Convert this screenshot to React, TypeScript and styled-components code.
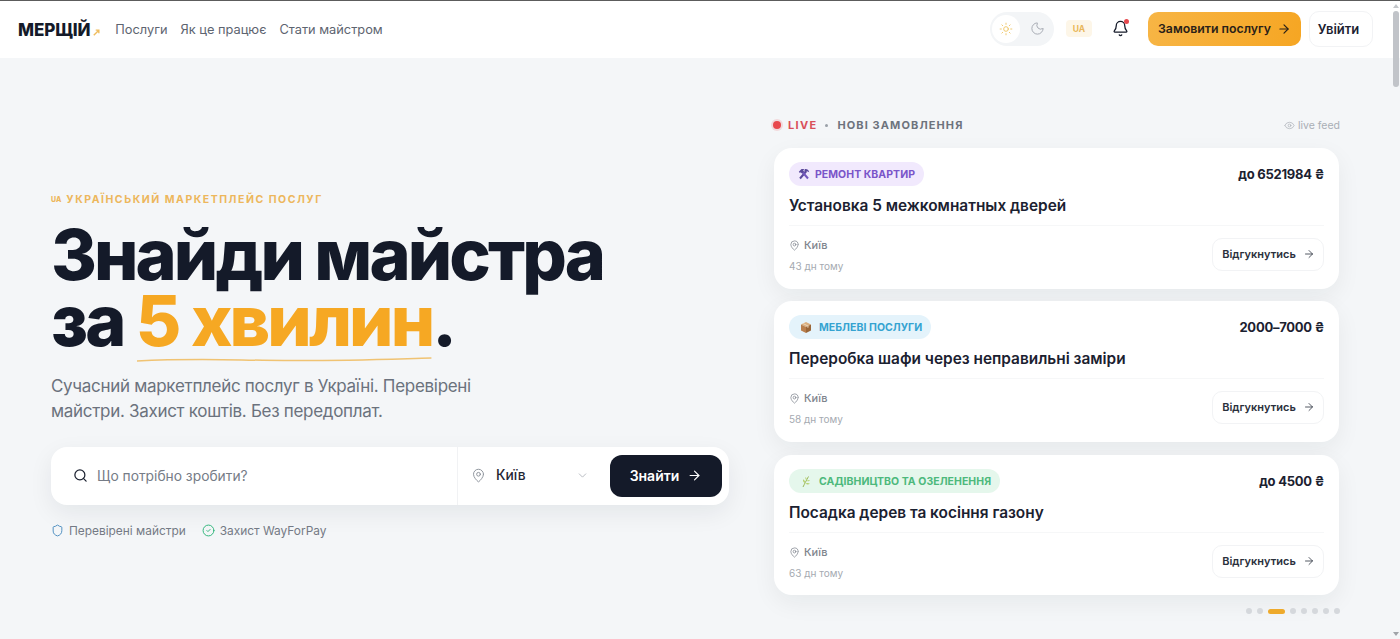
import React from 'react';
import styled, { createGlobalStyle } from 'styled-components';
import { ArrowRight, Bell, ChevronDown, CircleCheck, Eye, MapPin, Moon, Search, Shield, Sun } from 'lucide-react';

const GlobalStyle = createGlobalStyle`
  html, body, #root {
    margin: 0;
    padding: 0;
    height: 100%;
  }

  body {
    overflow: hidden;
    background: #f4f6f8;
    color: #141a29;
    font-family: Inter, "Noto Sans", "Liberation Sans", sans-serif;
  }

  * {
    box-sizing: border-box;
  }
`;

const Page = styled.div`
  height: 639px;
  overflow: hidden;
  border-top: 1px solid #5c5c5c;
`;

/* Header */
const Header = styled.header`
  height: 57px;
  padding: 0 27px 2px 18px;
  display: flex;
  align-items: center;
  justify-content: space-between;
  background: #fff;
`;

const HeaderSide = styled.div`
  display: flex;
  align-items: center;
`;

const HeaderNav = styled(HeaderSide)`
  padding-top: 2px;
`;

const Logo = styled.div`
  display: flex;
  align-items: center;
  gap: 3px;
  margin-right: 15px;
  font-size: 17px;
  font-weight: 800;
  letter-spacing: -0.1px;
  color: #141a29;

  svg {
    margin-top: 5px;
  }
`;

const NavLink = styled.a`
  margin-right: 13px;
  font-size: 12.8px;
  font-weight: 400;
  color: #5d6470;
`;

const ThemeToggle = styled.div`
  width: 64px;
  height: 34px;
  margin-right: 12px;
  padding: 0 2px;
  display: flex;
  align-items: center;
  gap: 3px;
  border-radius: 17px;
  background: #f3f5f7;
`;

const ThemeOption = styled.span<{ $active?: boolean }>`
  width: 28px;
  height: 28px;
  display: flex;
  align-items: center;
  justify-content: center;
  border-radius: 14px;
  background: ${p => (p.$active ? '#fff' : 'transparent')};
  color: ${p => (p.$active ? '#eec25e' : '#a3a8b0')};
`;

const LangChip = styled.span`
  width: 26px;
  height: 17px;
  margin-right: 18px;
  display: flex;
  align-items: center;
  justify-content: center;
  border-radius: 4px;
  background: #fdf6e8;
  color: #e9b658;
  font-size: 8.5px;
  font-weight: 700;
`;

const BellWrap = styled.span`
  position: relative;
  width: 20px;
  height: 20px;
  margin-right: 18px;
  display: flex;
  align-items: center;
  justify-content: center;
  color: #141a29;
`;

const BellDot = styled.i`
  position: absolute;
  top: 0;
  right: 1px;
  width: 5px;
  height: 5px;
  border-radius: 50%;
  background: #e5484d;
`;

const OrderButton = styled.button`
  width: 153px;
  height: 34px;
  margin-right: 8px;
  padding: 0;
  display: flex;
  align-items: center;
  justify-content: center;
  gap: 6px;
  border: 0;
  border-radius: 10px;
  background: linear-gradient(100deg, #f7b545, #f6a623);
  color: #2a2118;
  font-family: inherit;
  font-size: 12.3px;
  font-weight: 600;
`;

const LoginButton = styled.button`
  width: 64px;
  height: 36px;
  padding: 0 5px 0 0;
  border: 1px solid #f2f3f5;
  border-radius: 10px;
  background: #fff;
  color: #1b2130;
  font-family: inherit;
  font-size: 13px;
  font-weight: 600;
`;

/* Hero */
const Hero = styled.main`
  padding: 60px 60px 0 51px;
  display: grid;
  grid-template-columns: 1fr 568px;
  align-items: start;
`;

const HeroText = styled.section`
  padding-top: 75px;
  display: flex;
  flex-direction: column;
  align-items: flex-start;
`;

const Eyebrow = styled.div`
  display: flex;
  align-items: center;
  gap: 5px;
  margin-bottom: 16px;
  color: #edb75c;
  font-size: 10.5px;
  line-height: 13px;
  font-weight: 700;
  letter-spacing: 1.52px;
`;

const EyebrowFlag = styled.span`
  font-size: 7px;
  font-weight: 800;
  letter-spacing: 0;
`;

const Title = styled.h1`
  margin: 0 0 20px;
  font-size: 70px;
  line-height: 66px;
  font-weight: 850;
  letter-spacing: -2.92px;
  color: #141a29;
`;

const Accent = styled.span`
  position: relative;
  display: inline-block;
  color: #f6a823;
`;

const Underline = styled.svg`
  position: absolute;
  left: 0;
  bottom: -10px;
  width: 100%;
  height: 8px;
`;

const Lead = styled.p`
  margin: 0 0 23px;
  width: 440px;
  font-size: 17px;
  line-height: 25px;
  font-weight: 400;
  letter-spacing: -0.3px;
  color: #6b727d;
`;

const SearchBar = styled.div`
  width: 678px;
  height: 58px;
  padding: 0 7px 0 22px;
  display: flex;
  align-items: center;
  border-radius: 16px;
  background: #fff;
  box-shadow: 0 8px 24px rgba(20, 26, 41, 0.07);
`;

const SearchField = styled.div`
  width: 385px;
  height: 100%;
  padding-bottom: 1px;
  display: flex;
  align-items: center;
  gap: 9px;
  border-right: 1px solid #f1f2f4;
  color: #1b2130;
`;

const Placeholder = styled.span`
  font-size: 13.8px;
  color: #767c87;
`;

const CityField = styled.div`
  width: 152px;
  padding: 0 21px 2px 13px;
  display: flex;
  align-items: center;
  color: #8a9099;
`;

const CityName = styled.span`
  margin-left: 10px;
  flex: 1;
  font-size: 13.8px;
  font-weight: 500;
  color: #1f2533;
`;

const FindButton = styled.button`
  width: 112px;
  height: 42px;
  padding: 0 0 2px;
  display: flex;
  align-items: center;
  justify-content: center;
  gap: 8px;
  border: 0;
  border-radius: 12px;
  background: #141a29;
  color: #fff;
  font-family: inherit;
  font-size: 14px;
  font-weight: 600;
`;

const Perks = styled.div`
  margin-top: 18px;
  display: flex;
  gap: 16px;
`;

const Perk = styled.span<{ $color: string }>`
  display: flex;
  align-items: center;
  gap: 5px;
  font-size: 11.9px;
  line-height: 15px;
  color: #747a85;

  svg {
    color: ${p => p.$color};
  }
`;

/* Live feed */
const Feed = styled.section`
  display: flex;
  flex-direction: column;
`;

const FeedHead = styled.div`
  height: 14px;
  margin-bottom: 16px;
  display: flex;
  align-items: center;
`;

const LiveDot = styled.i`
  width: 8px;
  height: 8px;
  margin: 0 7px 0 1px;
  border-radius: 50%;
  background: #e8474c;
  box-shadow: 0 0 0 2px rgba(232, 71, 76, 0.16);
`;

const LiveLabel = styled.span`
  color: #d9505a;
  font-size: 11px;
  font-weight: 700;
  letter-spacing: 1.3px;
`;

const HeadBullet = styled.i`
  width: 3px;
  height: 3px;
  margin: 0 9px 0 8px;
  border-radius: 50%;
  background: #9aa0a8;
`;

const HeadTitle = styled.span`
  flex: 1;
  color: #6d737d;
  font-size: 11px;
  font-weight: 700;
  letter-spacing: 1.1px;
`;

const LiveFeedNote = styled.span`
  display: flex;
  align-items: center;
  gap: 3px;
  color: #a9aeb5;
  font-size: 10.5px;
`;

const Card = styled.article`
  height: 141px;
  margin: 0 1px 12px 2px;
  padding: 14px 15px 0;
  border-radius: 18px;
  background: #fff;
  box-shadow: 0 8px 24px rgba(20, 26, 41, 0.06);

  &:nth-of-type(2) {
    margin-bottom: 13px;
  }

  &:nth-of-type(3) {
    height: 140px;
  }
`;

const CardTop = styled.div`
  display: flex;
  align-items: center;
  justify-content: space-between;
`;

const Tag = styled.span<{ $bg: string; $fg: string }>`
  height: 24px;
  padding: 0 9px;
  display: flex;
  align-items: center;
  gap: 5px;
  border-radius: 12px;
  background: ${p => p.$bg};
  color: ${p => p.$fg};
  font-size: 10.5px;
  font-weight: 700;
  letter-spacing: 0.05px;
`;

const Price = styled.span`
  margin-bottom: 1px;
  font-size: 13px;
  font-weight: 700;
  letter-spacing: -0.25px;
  color: #1b2130;
`;

const CardTitle = styled.h3`
  margin: 10px 0 0;
  padding-bottom: 9px;
  border-bottom: 1px solid #f6f7f8;
  font-size: 15.4px;
  line-height: 20px;
  font-weight: 600;
  color: #1b2130;
`;

const CardBottom = styled.div`
  margin-top: 12px;
  display: flex;
  align-items: flex-start;
  justify-content: space-between;
`;

const Where = styled.div`
  display: flex;
  flex-direction: column;
  gap: 8px;
`;

const Place = styled.span`
  display: flex;
  align-items: center;
  gap: 4px;
  color: #7e848d;
  font-size: 11px;
  line-height: 14px;
  font-weight: 500;
`;

const Ago = styled.span`
  color: #a5aab1;
  font-size: 10px;
  line-height: 13px;
`;

const RespondButton = styled.button`
  width: 112px;
  height: 33px;
  padding: 0 0 1px 1px;
  display: flex;
  align-items: center;
  justify-content: center;
  gap: 7px;
  border: 1px solid #f2f3f5;
  border-radius: 10px;
  background: #fff;
  color: #2a303c;
  font-family: inherit;
  font-size: 11px;
  font-weight: 600;
`;

const Dots = styled.div`
  margin-top: 1px;
  display: flex;
  justify-content: flex-end;
  align-items: center;
  gap: 5px;
`;

const Dot = styled.i<{ $active?: boolean }>`
  width: ${p => (p.$active ? '17px' : '6px')};
  height: ${p => (p.$active ? '5px' : '6px')};
  border-radius: 3px;
  background: ${p => (p.$active ? '#eeaa2c' : '#d5d8dc')};
`;

/* Browser scrollbar, lies over the page */
const ScrollTrack = styled.div`
  position: fixed;
  top: 1px;
  right: 0;
  bottom: 0;
  width: 8px;
  display: flex;
  flex-direction: column;
  align-items: center;
`;

const ScrollArrow = styled.i<{ $down?: boolean }>`
  width: 0;
  height: 0;
  margin: ${p => (p.$down ? 'auto 0 3px' : '3px 0 0')};
  border-left: 3px solid transparent;
  border-right: 3px solid transparent;
  border-top: ${p => (p.$down ? '4px solid #a0a3a8' : '0')};
  border-bottom: ${p => (p.$down ? '0' : '4px solid #c4c7cb')};
`;

const ScrollThumb = styled.i`
  width: 6px;
  height: 76px;
  margin-top: 3px;
  border-radius: 3px;
  background: #c1c4c9;
`;

const ToolsIcon = () => (
  <svg width="12" height="12" viewBox="0 0 12 12" fill="none">
    <path d="M2 10.500 8 3.500" stroke="#5b4a9b" strokeWidth="2" />
    <path d="M10 10.500 4 3.500" stroke="#7357bd" strokeWidth="2" />
    <path d="M.8 3.800 3.500 1h3L5.200 2.300 6 3.500 4 5.500 2.800 4.200 1.900 5z" fill="#5b4a9b" />
    <path d="M6.800 1.200c2-.5 3.900.8 4.400 3L9 3.300 7.800 4.700 6.300 3.200z" fill="#5b4a9b" />
  </svg>
);

const BoxIcon = () => (
  <svg width="16" height="13" viewBox="-1.500 0 16 13">
    <path d="M6.500 1 11.500 3.500 6.500 6 1.500 3.500z" fill="#d9ae7f" />
    <path d="M1.500 3.500 6.500 6v6l-5-2.500z" fill="#b97f4d" />
    <path d="M11.500 3.500 6.500 6v6l5-2.500z" fill="#9a6638" />
    <path d="M4 2.300 9 4.800v1.600l-1 .5V5.300L3 2.800z" fill="#ecd6b8" />
  </svg>
);

const HerbIcon = () => (
  <svg width="16" height="13" viewBox="-1.500 0 16 13" fill="none">
    <path d="M3.500 12C5 9 6.500 6 9 1.500" stroke="#9ab85a" strokeWidth="1" />
    <path d="M5.500 8C4 7.500 3.300 6 3.500 4.200 5 5 5.800 6.300 5.500 8zM7 5.200C6 4.600 5.700 3.200 6 2c1 .8 1.400 2 1 3.200zM6 8.600c1.400-.8 3-.7 4.400.2-1.400 1-3 1-4.400-.2zM7.500 5.800c1-.6 2-.6 3-.2-.9.9-2 1-3 .2z" fill="#b5cf6b" />
  </svg>
);

const cards = [
  { tag: 'РЕМОНТ КВАРТИР', bg: '#f1e9fd', fg: '#7a55c9', icon: <ToolsIcon />, price: 'до 6521984 ₴', title: 'Установка 5 межкомнатных дверей', ago: '43 дн тому' },
  { tag: 'МЕБЛЕВІ ПОСЛУГИ', bg: '#e4f3fb', fg: '#35a3d1', icon: <BoxIcon />, price: '2000–7000 ₴', title: 'Переробка шафи через неправильні заміри', ago: '58 дн тому' },
  { tag: 'САДІВНИЦТВО ТА ОЗЕЛЕНЕННЯ', bg: '#e5f7ec', fg: '#4db97c', icon: <HerbIcon />, price: 'до 4500 ₴', title: 'Посадка дерев та косіння газону', ago: '63 дн тому' },
];

const App: React.FC = () => {
  return (
    <Page>
      <GlobalStyle />
      <Header>
        <HeaderNav>
          <Logo>
            МЕРЩІЙ
            <svg width="7" height="7" viewBox="0 0 9 9" fill="none" stroke="#efbd5f" strokeWidth="1.800">
              <path d="M1 8 7.500 1.500M3.500 1.500h4v4" />
            </svg>
          </Logo>
          <NavLink>Послуги</NavLink>
          <NavLink>Як це працює</NavLink>
          <NavLink>Стати майстром</NavLink>
        </HeaderNav>
        <HeaderSide>
          <ThemeToggle>
            <ThemeOption $active><Sun size={14} strokeWidth={1.5} /></ThemeOption>
            <ThemeOption><Moon size={15} strokeWidth={1.5} /></ThemeOption>
          </ThemeToggle>
          <LangChip>UA</LangChip>
          <BellWrap>
            <Bell size={17} strokeWidth={1.8} />
            <BellDot />
          </BellWrap>
          <OrderButton>
            Замовити послугу
            <ArrowRight size={14} strokeWidth={2} />
          </OrderButton>
          <LoginButton>Увійти</LoginButton>
        </HeaderSide>
      </Header>

      <Hero>
        <HeroText>
          <Eyebrow>
            <EyebrowFlag>UA</EyebrowFlag>
            УКРАЇНСЬКИЙ МАРКЕТПЛЕЙС ПОСЛУГ
          </Eyebrow>
          <Title>
            Знайди майстра
            <br />
            за <Accent>
              5 хвилин
              <Underline viewBox="0 0 300 8" preserveAspectRatio="none" fill="none">
                <path d="M1 5C60 2 90 4 150 4.500S260 3 299 2" stroke="#f0c373" strokeWidth="1.500" />
              </Underline>
            </Accent>.
          </Title>
          <Lead>Сучасний маркетплейс послуг в Україні. Перевірені майстри. Захист коштів. Без передоплат.</Lead>
          <SearchBar>
            <SearchField>
              <Search size={15} strokeWidth={2} />
              <Placeholder>Що потрібно зробити?</Placeholder>
            </SearchField>
            <CityField>
              <MapPin size={15} strokeWidth={1.5} />
              <CityName>Київ</CityName>
              <ChevronDown size={13} strokeWidth={1.5} color="#a9aeb5" />
            </CityField>
            <FindButton>
              Знайти
              <ArrowRight size={15} strokeWidth={1.8} />
            </FindButton>
          </SearchBar>
          <Perks>
            <Perk $color="#4f8fc0"><Shield size={13} strokeWidth={1.8} />Перевірені майстри</Perk>
            <Perk $color="#2fb57a"><CircleCheck size={13} strokeWidth={1.8} />Захист WayForPay</Perk>
          </Perks>
        </HeroText>

        <Feed>
          <FeedHead>
            <LiveDot />
            <LiveLabel>LIVE</LiveLabel>
            <HeadBullet />
            <HeadTitle>НОВІ ЗАМОВЛЕННЯ</HeadTitle>
            <LiveFeedNote><Eye size={11} strokeWidth={1.5} />live feed</LiveFeedNote>
          </FeedHead>
          {cards.map(card => (
            <Card key={card.title}>
              <CardTop>
                <Tag $bg={card.bg} $fg={card.fg}>{card.icon}{card.tag}</Tag>
                <Price>{card.price}</Price>
              </CardTop>
              <CardTitle>{card.title}</CardTitle>
              <CardBottom>
                <Where>
                  <Place><MapPin size={11} strokeWidth={1.6} />Київ</Place>
                  <Ago>{card.ago}</Ago>
                </Where>
                <RespondButton>
                  Відгукнутись
                  <ArrowRight size={12} strokeWidth={1.6} />
                </RespondButton>
              </CardBottom>
            </Card>
          ))}
          <Dots>
            {[0, 1, 2, 3, 4, 5, 6, 7].map(i => <Dot key={i} $active={i === 2} />)}
          </Dots>
        </Feed>
      </Hero>

      <ScrollTrack>
        <ScrollArrow />
        <ScrollThumb />
        <ScrollArrow $down />
      </ScrollTrack>
    </Page>
  );
};

export default App;
